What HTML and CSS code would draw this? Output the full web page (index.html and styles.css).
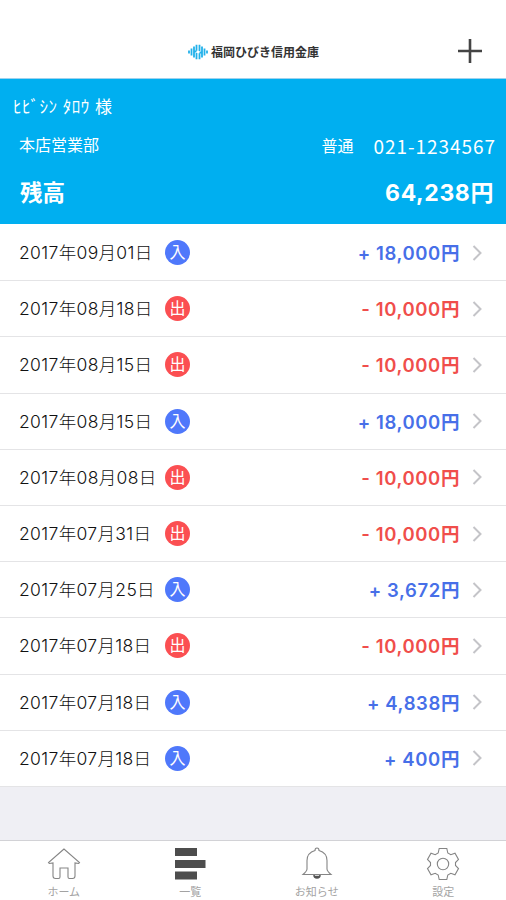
FILE: index.html
```
<!DOCTYPE html>
<html lang="ja">
  <head>
    <meta charset="utf-8">
    <title>福岡ひびき信用金庫</title>
    <link rel="stylesheet" href="styles.css">
  </head>
  <body>
    <header class="navbar">
      <div class="brand">
        <svg class="logo" width="20" height="16" viewBox="0 0 20 16">
          <path d="M1 6.5v3M3.5 4.500v7M6 2.500v11M8.500 .8v6M8.500 9v6.200M11.500 .8v6.200M11.500 9.200v6M14 2.500v11M16.500 4.500v7M19 6.500v3M6 7.500h2.500M11.500 8.500H14" />
        </svg>
        <span class="brand-name">福岡ひびき信用金庫</span>
      </div>
      <svg class="plus" width="26" height="26" viewBox="0 0 26 26">
        <path d="M13 1v24M1 13h24" />
      </svg>
    </header>

    <section class="account">
      <p class="owner">ﾋﾋﾞｼﾝ ﾀﾛｳ 様</p>
      <div class="branch">
        <span class="branch-name">本店営業部</span>
        <span class="kind">普通</span>
        <span class="number">021-1234567</span>
      </div>
      <div class="balance">
        <span class="balance-label">残高</span>
        <span class="balance-value">64,238円</span>
      </div>
    </section>

    <ul class="history" id="history"></ul>

    <nav class="tabs">
      <a class="tab">
        <svg width="34" height="34" viewBox="0 0 34 34">
          <path d="M17 2 1.5 15.5l.8 1L6 16v13q0 2.500 2.500 2.500h3q1.500 0 1.500-1.500v-9h8v9q0 1.500 1.500 1.500h3q2.500 0 2.500-2.500V16l3.700.5.8-1z" />
        </svg>
        <span>ホーム</span>
      </a>
      <a class="tab active">
        <svg width="34" height="34" viewBox="0 0 34 34">
          <path d="M2 1h22v8H2zM2 13h30.500v8H2zM2 24.500h22v8H2z" />
        </svg>
        <span>一覧</span>
      </a>
      <a class="tab">
        <svg width="34" height="34" viewBox="0 0 34 34">
          <path d="M15 3.500q0-2.500 2-2.500t2 2.500c5 1.500 8 5 8 10V22q0 2 4 5.500H3Q7 24 7 22v-8.500c0-5 3-8.500 8-10z" />
          <path class="dark" d="M14 28a3 3 0 0 0 6 0M15 29.500h4" />
        </svg>
        <span>お知らせ</span>
      </a>
      <a class="tab">
        <svg width="34" height="34" viewBox="0 0 34 34">
          <path d="M13.200 1.500h7.600l1 4.500 3 1.700L29 6.200l3.500 6.300-3 3v3l3 3L29 27.800l-4.200-1.500-3 1.700-1 4.500h-7.600l-1-4.500-3-1.700L5 27.800l-3.500-6.300 3-3v-3l-3-3L5 6.200l4.200 1.500 3-1.700z" />
          <circle cx="17" cy="17" r="5.700" />
        </svg>
        <span>設定</span>
      </a>
    </nav>

    <script src="script.js"></script>
  </body>
</html>
```
FILE: styles.css
```
* {
  box-sizing: border-box;
}

body {
  margin: 0;
  height: 900px;
  display: flex;
  flex-direction: column;
  overflow: hidden;
  background-color: #efeff4;
  font-family: Inter, "Noto Sans CJK JP", sans-serif;
}

p,
ul {
  margin: 0;
  padding: 0;
}

.navbar {
  height: 79px;
  flex: none;
  padding: 24px 23px 0 0;
  display: grid;
  grid-template-columns: 1fr auto 1fr;
  align-items: center;
  background-color: white;
  border-bottom: 1px solid #9dd2ee;
}

.brand {
  grid-column: 2;
  display: flex;
  align-items: center;
  gap: 3px;
  margin-left: 24px;
}

.logo {
  margin-top: 2px;
  fill: none;
  stroke: #22b1ea;
  stroke-width: 1.8;
}

.brand-name {
  margin-top: 3px;
  font-size: 12px;
  line-height: 16px;
  font-weight: 700;
  color: #333;
}

.plus {
  justify-self: end;
  stroke: #444;
  stroke-width: 2.6;
}

.account {
  height: 145px;
  flex: none;
  padding: 16px 12px 0 13px;
  background-color: #00aff0;
  color: white;
}

.owner {
  font-size: 17px;
  line-height: 24px;
  letter-spacing: 0.5px;
}

.branch {
  height: 24px;
  margin-top: 14px;
  padding-left: 6px;
  display: flex;
  align-items: center;
  font-size: 16px;
  line-height: 24px;
}

.branch-name {
  flex: 1;
}

.kind {
  padding-top: 2px;
}

.number {
  margin-left: 20px;
  margin-right: -2px;
  padding-top: 1px;
  font-family: "Noto Sans CJK JP", sans-serif;
  font-size: 19px;
  letter-spacing: 0.95px;
}

.balance {
  margin-top: 21px;
  padding-left: 7px;
  display: flex;
  justify-content: space-between;
  font-size: 22.5px;
  line-height: 30px;
  font-weight: 700;
}

.balance-value {
  font-size: 23px;
  letter-spacing: 0.6px;
}

.history {
  padding-top: 1px;
  list-style: none;
  background-color: white;
}

.row {
  height: 56.2px;
  padding: 0 22px 0 19px;
  display: flex;
  align-items: center;
  border-bottom: 1px solid #e4e4e6;
}

.date {
  width: 146px;
  padding-top: 1px;
  font-size: 17.5px;
  line-height: 24px;
  font-weight: 300;
  letter-spacing: 0.35px;
  color: #111;
  white-space: nowrap;
}

.mark {
  width: 25px;
  height: 25px;
  border-radius: 50%;
  text-align: center;
  font-size: 16px;
  line-height: 24px;
  color: white;
}

.amount {
  flex: 1;
  padding-top: 1px;
  text-align: right;
  font-size: 18.5px;
  line-height: 24px;
  font-weight: 600;
  letter-spacing: 0.6px;
}

.in .mark {
  background-color: #4f78fb;
}

.out .mark {
  background-color: #fb4f52;
}

.in .amount {
  color: #476fe8;
}

.out .amount {
  color: #f04e4b;
}

.chevron {
  margin-left: 12px;
  fill: none;
  stroke: #c4c4c8;
  stroke-width: 2;
}

.tabs {
  height: 60px;
  flex: none;
  margin-top: auto;
  padding-top: 6px;
  display: grid;
  grid-template-columns: repeat(4, 1fr);
  background-color: white;
  border-top: 1px solid #d2d2d6;
}

.tab {
  display: flex;
  flex-direction: column;
  align-items: center;
  padding-left: 1px;
  font-size: 11px;
  line-height: 16px;
  color: #a3a3a3;
}

.tab span {
  margin-top: 3px;
}

.tab svg {
  fill: none;
  stroke: #858585;
  stroke-width: 1.1;
}

.tab .dark {
  stroke: #555;
  stroke-width: 1.5;
}

.active svg {
  fill: #4d4d4d;
  stroke: none;
}
```
FILE: script.js
```
const list = document.querySelector("#history");

const entries = [
  ["2017年09月01日", "in", "18,000"],
  ["2017年08月18日", "out", "10,000"],
  ["2017年08月15日", "out", "10,000"],
  ["2017年08月15日", "in", "18,000"],
  ["2017年08月08日", "out", "10,000"],
  ["2017年07月31日", "out", "10,000"],
  ["2017年07月25日", "in", "3,672"],
  ["2017年07月18日", "out", "10,000"],
  ["2017年07月18日", "in", "4,838"],
  ["2017年07月18日", "in", "400"],
];

entries.forEach(([date, type, amount]) => {
  const row = document.createElement("li");
  row.className = `row ${type}`;
  row.innerHTML = `
    <span class="date">${date}</span>
    <span class="mark">${type === "in" ? "入" : "出"}</span>
    <span class="amount">${type === "in" ? "+" : "-"} ${amount}円</span>
    <svg class="chevron" width="12" height="18" viewBox="0 0 12 18">
      <path d="M1.500 2l7 7-7 7" />
    </svg>`;
  list.appendChild(row);
});
```
